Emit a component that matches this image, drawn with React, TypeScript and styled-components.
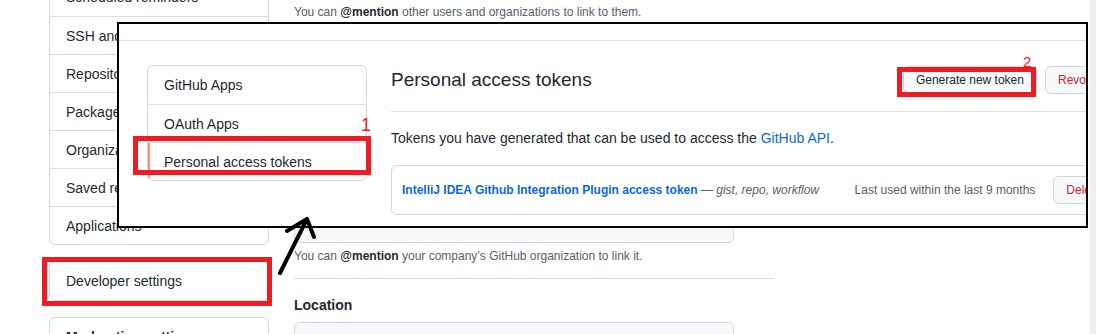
import styled, { createGlobalStyle } from "styled-components"

const GlobalStyle = createGlobalStyle`
    body {
        margin: 0;
        font-family: "Liberation Sans", Arial, sans-serif;
        color: #24292f;
        background: #fff;
    }
`

const Page = styled.div`
    position: relative;
    width: 1096px;
    height: 334px;
    overflow: hidden;
    display: flex;
    background: #fff;
`
const Viewport = styled.div`
    flex: 1;
    display: flex;
    align-items: flex-start;
    gap: 25px;
    padding-left: 49px;
    margin-top: -23px;
`
const Scrollbar = styled.div`
    width: 6px;
    background: #f1f1f1;
`
const SideColumn = styled.nav`
    width: 220px;
    display: flex;
    flex-direction: column;
    gap: 16px;
`
const MenuBox = styled.div`
    border: 1px solid #d0d7de;
    border-radius: 6px;
    overflow: hidden;
    background: #fff;
`
const MenuItem = styled.div<{ $selected?: boolean; $bold?: boolean }>`
    position: relative;
    box-sizing: border-box;
    height: 38px;
    padding: 0 16px;
    display: flex;
    align-items: center;
    font-size: 14px;
    white-space: nowrap;
    font-weight: ${p => (p.$bold ? 700 : 400)};
    box-shadow: ${p => (p.$selected ? "inset 2px 0 0 #fd8c73" : "none")};
    & + & {
        border-top: 1px solid #d8dee4;
    }
`
const MainColumn = styled.main`
    width: 480px;
    padding-top: 26px;
`
const Note = styled.p`
    margin: 0;
    font-size: 12px;
    line-height: 18px;
    color: #57606a;
    b {
        color: #24292f;
    }
`
const FormGroup = styled.div`
    margin-top: 16px;
`
const Label = styled.label<{ $gap?: number }>`
    display: block;
    font-size: 14px;
    font-weight: 700;
    line-height: 20px;
    margin-bottom: ${p => p.$gap ?? 6}px;
`
const Input = styled.div`
    box-sizing: border-box;
    width: 440px;
    height: 32px;
    border: 1px solid #d0d7de;
    border-radius: 6px;
    background: #f6f8fa;
`
const Rule = styled.hr`
    margin: 13px 0 16px;
    border: 0;
    border-top: 1px solid #d8dee4;
`

/* pasted screenshot of the developer settings page */
const Inset = styled.div`
    position: absolute;
    left: 117px;
    top: 22px;
    width: 971px;
    height: 206px;
    box-sizing: border-box;
    border: 2px solid #000;
    background: #fff;
    overflow: hidden;
`
const InsetHeader = styled.div`
    height: 16px;
    border-bottom: 1px solid #d8dee4;
`
const InsetBody = styled.div`
    display: flex;
    align-items: flex-start;
    gap: 24px;
    padding: 24px 0 0 28px;
`
const InsetSide = styled.div`
    width: 220px;
    flex-shrink: 0;
`
const InsetMain = styled.div`
    width: 736px;
    flex-shrink: 0;
`
const Subhead = styled.div`
    display: flex;
    align-items: center;
    height: 30px;
    padding-bottom: 16px;
    border-bottom: 1px solid #d8dee4;
`
const Title = styled.h2`
    margin: 0;
    flex: 1;
    font-size: 19px;
    font-weight: 400;
    line-height: 30px;
`
const Actions = styled.div`
    display: flex;
    gap: 8px;
`
const Button = styled.button<{ $danger?: boolean }>`
    font-family: inherit;
    font-size: 12px;
    font-weight: 500;
    line-height: 20px;
    padding: 3px 12px;
    border: 1px solid #d0d7de;
    border-radius: 6px;
    background: #f6f8fa;
    color: ${p => (p.$danger ? "#cf222e" : "#24292f")};
    white-space: nowrap;
`
const Lead = styled.p`
    margin: 16px 0;
    font-size: 14px;
    line-height: 21px;
    a {
        color: #0969da;
        text-decoration: none;
    }
`
const TokenBox = styled.div`
    display: flex;
    align-items: center;
    border: 1px solid #d0d7de;
    border-radius: 6px;
    padding: 10px 12px 10px 10px;
    font-size: 12px;
    white-space: nowrap;
`
const TokenName = styled.a`
    color: #0969da;
    font-weight: 700;
    text-decoration: none;
`
const Scopes = styled.span`
    color: #57606a;
    font-style: italic;
`
const LastUsed = styled.span`
    margin-left: auto;
    margin-right: 18px;
    color: #57606a;
`

/* paint annotations */
const RedBox = styled.div<{ $x: number; $y: number; $w: number; $h: number }>`
    position: absolute;
    left: ${p => p.$x}px;
    top: ${p => p.$y}px;
    width: ${p => p.$w}px;
    height: ${p => p.$h}px;
    box-sizing: border-box;
    border: 5px solid #ed1c24;
`
const StepNumber = styled.span<{ $x: number; $y: number; $size: number }>`
    position: absolute;
    left: ${p => p.$x}px;
    top: ${p => p.$y}px;
    font-size: ${p => p.$size}px;
    line-height: 1;
    color: #ed1c24;
`
const Arrow = styled.svg`
    position: absolute;
    left: 270px;
    top: 200px;
`

const settingsMenu = [
    "Scheduled reminders",
    "SSH and GPG keys",
    "Repositories",
    "Packages",
    "Organizations",
    "Saved replies",
    "Applications",
]

function App() {
    return (
        <>
            <GlobalStyle />
            <Page>
                <Viewport>
                    <SideColumn>
                        <MenuBox>
                            {settingsMenu.map(item => (
                                <MenuItem key={item}>{item}</MenuItem>
                            ))}
                        </MenuBox>
                        <MenuBox>
                            <MenuItem>Developer settings</MenuItem>
                        </MenuBox>
                        <MenuBox>
                            <MenuItem $bold>Moderation settings</MenuItem>
                        </MenuBox>
                    </SideColumn>
                    <MainColumn>
                        <Note>
                            You can <b>@mention</b> other users and organizations to link to them.
                        </Note>
                        <FormGroup>
                            <Label>URL</Label>
                            <Input />
                        </FormGroup>
                        <FormGroup>
                            <Label>Twitter username</Label>
                            <Input />
                        </FormGroup>
                        <FormGroup>
                            <Label>Company</Label>
                            <Input />
                        </FormGroup>
                        <Note style={{ marginTop: 4 }}>
                            You can <b>@mention</b> your company’s GitHub organization to link it.
                        </Note>
                        <Rule />
                        <Label $gap={7}>Location</Label>
                        <Input />
                    </MainColumn>
                </Viewport>
                <Scrollbar />

                <Inset>
                    <InsetHeader />
                    <InsetBody>
                        <InsetSide>
                            <MenuBox>
                                <MenuItem>GitHub Apps</MenuItem>
                                <MenuItem>OAuth Apps</MenuItem>
                                <MenuItem $selected>Personal access tokens</MenuItem>
                            </MenuBox>
                        </InsetSide>
                        <InsetMain>
                            <Subhead>
                                <Title>Personal access tokens</Title>
                                <Actions>
                                    <Button>Generate new token</Button>
                                    <Button $danger>Revoke all</Button>
                                </Actions>
                            </Subhead>
                            <Lead>
                                Tokens you have generated that can be used to access the <a href="#">GitHub API</a>.
                            </Lead>
                            <TokenBox>
                                <TokenName href="#">IntelliJ IDEA Github Integration Plugin access token</TokenName>
                                <Scopes>&nbsp;— gist, repo, workflow</Scopes>
                                <LastUsed>Last used within the last 9 months</LastUsed>
                                <Button $danger>Delete</Button>
                            </TokenBox>
                        </InsetMain>
                    </InsetBody>
                </Inset>

                <RedBox $x={42} $y={257} $w={230} $h={49} />
                <RedBox $x={133} $y={136} $w={238} $h={39} />
                <RedBox $x={897} $y={67} $w={139} $h={30} />
                <StepNumber $x={361} $y={116} $size={18}>1</StepNumber>
                <StepNumber $x={1023} $y={54} $size={15}>2</StepNumber>

                <Arrow width="60" height="80" viewBox="0 0 60 80">
                    <path
                        d="M10 73 L37 19 M17 31 L37 19 L44 37"
                        fill="none"
                        stroke="#000"
                        strokeWidth="4"
                        strokeLinecap="round"
                        strokeLinejoin="round"
                    />
                </Arrow>
            </Page>
        </>
    )
}

export default App
